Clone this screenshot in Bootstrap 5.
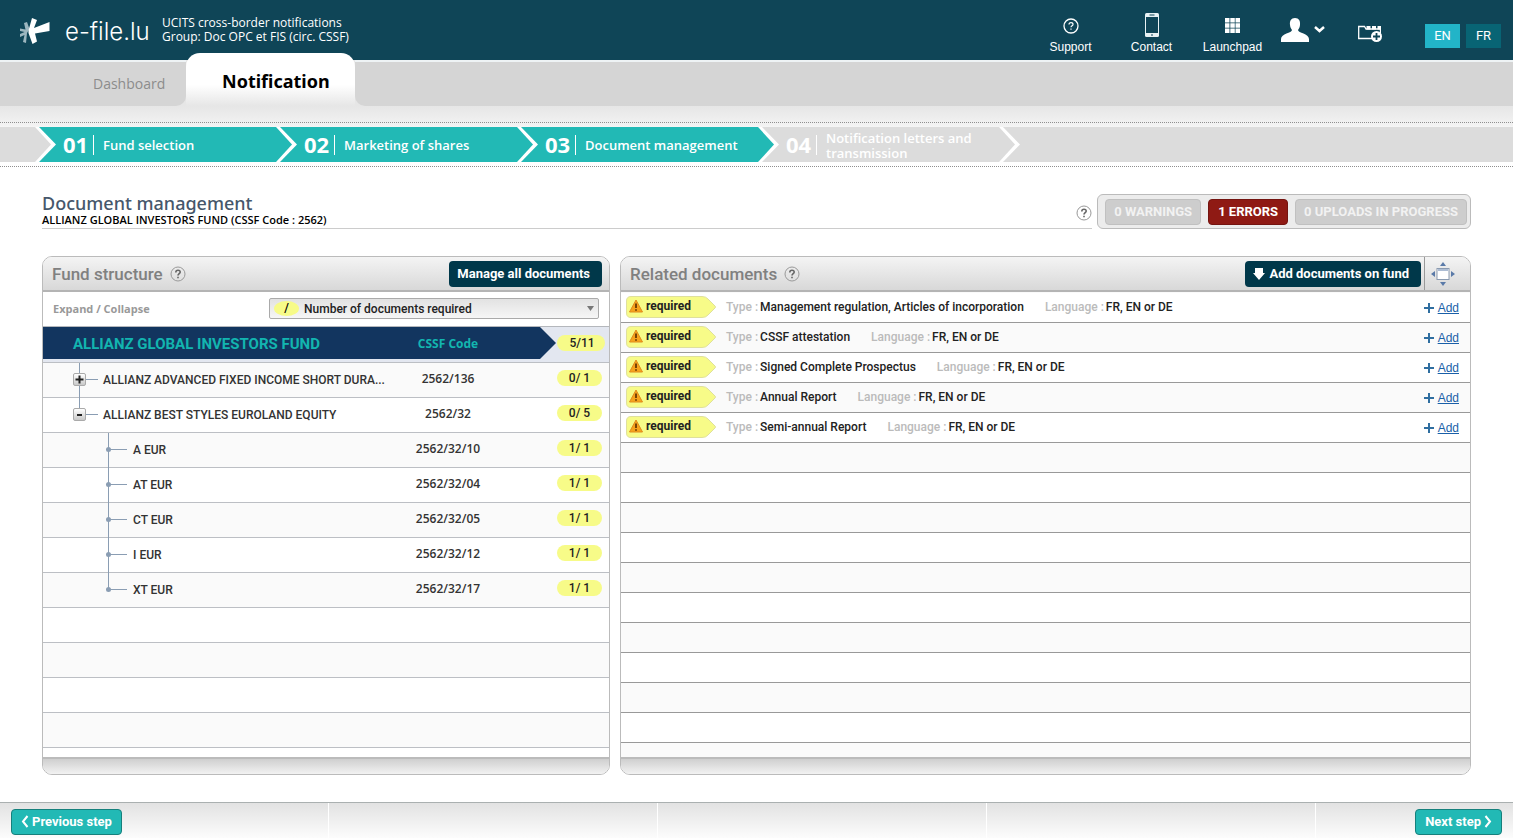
<!DOCTYPE html>
<html lang="en">
<head>
<meta charset="utf-8">
<meta name="viewport" content="width=device-width, initial-scale=1">
<title>e-file.lu - Document management</title>
<link rel="stylesheet" href="https://cdn.jsdelivr.net/npm/bootstrap@5.3.0/dist/css/bootstrap.min.css">
<style>
  :root { --navy:#0f4557; --teal:#22b9b5; --dark:#00384a; --yellow:#f7fb88; --tree:#8a9db3; }
  body { font-family:Roboto,sans-serif; font-size:12px; line-height:16px; color:#333; background:#fff; }
  .humanist { font-family:"Open Sans",sans-serif; }
  button, select { font-family:inherit; }

  /* top bar */
  .topbar { background:var(--navy); height:60px; color:#fff; padding-left:18px; padding-right:12px; }
  .brand-name { font-family:Inter,sans-serif; font-size:24px; line-height:32px; font-weight:300; color:#fff; width:97px; margin-left:14px; padding-top:4px; }
  .app-info { line-height:14px; }
  .tool { width:81px; height:60px; padding-bottom:6px; color:#fff; font-family:"Liberation Sans",sans-serif; line-height:14px; text-decoration:none; }
  .tool svg { margin-bottom:3px; }
  .folder { margin:8px 43px 0 33px; }
  .langs { gap:6px; margin-top:12px; }
  .lang { width:35px; height:24px; line-height:24px; font-size:13px; color:#fff; text-align:center; text-decoration:none; background:#086474; }
  .lang.current { background:#22b4c8; }

  /* tabs */
  .tabs { background:#e6e6e6; height:46px; }
  .tab-fill { background:#d5d5d5; border-top:2px solid #eef3f5; }
  .tab-fill.before { width:186px; border-bottom-right-radius:10px; padding-left:93px; }
  .tab-fill.after { border-bottom-left-radius:10px; }
  .tab-fill a { color:#8c8c8c; font-size:14px; text-decoration:none; }
  .tab-on { width:169px; height:53px; margin-top:-7px; border-radius:14px 14px 0 0; padding:3px 0 0 36px; color:#000; font-family:"Noto Sans",sans-serif; font-size:18px; font-weight:700; text-decoration:none;
    background:linear-gradient(#fff 60%,#e6e6e6); }

  /* wizard steps */
  .wizard { background:linear-gradient(#e6e6e6,#f3f3f3 20px,#fff 24px); padding-top:16px; }
  .dots { border-top:1px dotted #8f8f8f; border-bottom:1px dotted #8f8f8f; padding:4px 0; }
  .steps { background:#dcdcdc; height:35px; padding-left:34px; }
  .step { width:241px; color:#fff; font-weight:600; font-size:13px; line-height:15px; }
  .step.done { background:var(--teal); }
  .step svg { width:23px; height:35px; flex:none; }
  .step .num { font-size:22px; font-weight:700; width:30px; margin-left:6px; }
  .step .txt { border-left:1px solid #fff; padding:2px 0 0 9px; height:20px; width:168px; }

  /* page heading */
  .inner { padding:27px 42px 27px; }
  .heading { border-bottom:1px solid #ccc; }
  .heading h1 { font-family:"Noto Sans",sans-serif; font-size:18px; line-height:18px; font-weight:500; color:#46576b; margin:0; }
  .heading p { font-size:11px; line-height:16px; font-weight:600; color:#000; margin:0; }
  .statusbox { border:1px solid #bbb; border-radius:6px; background:#ececec; padding:3px 3px 3px 7px; margin-left:5px; gap:7px; height:35px; }
  .stat { border:1px solid #c0c0c0; background:#cdcdcd; color:#f2f2f2; border-radius:4px; font-size:13px; font-weight:700; line-height:24px; padding:0 8px; }
  .stat.err { background:#8f1a14; border-color:#741410; color:#fff; padding:0 9px; }

  /* panels */
  .panels { gap:10px; margin-top:27px; }
  .panel { border:1px solid #bbb; border-radius:10px; overflow:hidden; min-width:0; }
  .p-left { flex:2 1 0; } .p-right { flex:3 1 0; }
  .p-head { height:35px; background:linear-gradient(#f4f4f4,#d8d8d8); border-bottom:2px solid #b4b4b4; padding-left:9px; }
  .p-head h2 { font-size:17px; line-height:20px; font-weight:500; color:#808080; margin:0 7px 0 0; }
  .p-foot { height:17px; border-top:2px solid #bbb; background:linear-gradient(#cfcfcf,#f2f2f2); }
  .dark-btn { background:var(--dark); color:#fff; border:0; border-radius:4px; font-size:13px; font-weight:700; height:26px; line-height:26px; padding:0 12px 0 8px; gap:4px; margin-right:7px; }
  .dark-btn.add-docs { margin-right:3px; }
  .filter { height:34px; padding:0 10px 1px; }
  .filter label { color:#999; font-size:11px; font-weight:700; }
  .pick { position:relative; width:330px; }
  .pick select { display:block; appearance:none; width:100%; height:21px; border:1px solid #aaa; border-radius:2px; background:linear-gradient(#e2e2e2,#f6f6f6); color:#222; font-size:12px; font-weight:500; padding:0 20px 0 34px; }
  .pick .oval { position:absolute; left:5px; top:3px; width:25px; height:15px; line-height:15px; border-radius:50%; background:var(--yellow); text-align:center; color:#000; font-weight:500; pointer-events:none; }
  .pick svg { position:absolute; right:5px; top:8px; pointer-events:none; }

  .tree-bg { background:repeating-linear-gradient(#fafafa 0 34px,#bcbfc4 34px 35px,#fff 35px 69px,#bcbfc4 69px 70px) 0 37px; }
  .tree { width:100%; table-layout:fixed; border-collapse:separate; border-spacing:0; }
  .tree td, .tree th { padding:0; height:35px; border-bottom:1px solid #bcbfc4; vertical-align:middle; }
  .tree .c-code { width:160px; } .tree .c-count { width:53px; }
  .tree thead th { height:37px; background:#e3e7f0; border-top:1px solid #b4b7bc; vertical-align:top; }
  .ribbon { background:#12355f; height:32px; line-height:34px; color:#12b5b0; }
  .ribbon.first { padding-left:30px; font-size:15px; font-weight:700; }
  .ribbon.tip { clip-path:polygon(0 0,calc(100% - 16px) 0,100% 50%,calc(100% - 16px) 100%,0 100%); font-weight:700; }
  .code { text-align:center; padding-right:56px; }
  .tree tbody .code { padding-right:56px; padding-bottom:2px; font-weight:600; }
  .tree tbody tr:nth-child(odd) { background:#fafafa; } .tree tbody tr:nth-child(even) { background:#fff; }
  .count { display:block; width:45px; height:16px; line-height:16px; margin-left:1px; margin-bottom:4px; border-radius:8px; background:var(--yellow); color:#222; font-weight:500; text-align:center; }
  thead .count { width:48px; margin-top:8px; padding-left:2px; }
  .nm { height:34px; font-weight:500; white-space:nowrap; }
  .twig { position:relative; width:30px; height:34px; margin-left:30px; flex:none; }
  .twig::before { content:""; position:absolute; left:6px; top:0; height:35px; border-left:1px solid var(--tree); }
  .twig::after { content:""; position:absolute; left:6px; top:16px; width:19px; border-top:1px solid var(--tree); }
  .twig.end::before { height:16px; }
  .twig.leaf { margin-left:59px; width:31px; }
  .twig i { position:absolute; left:4px; top:14px; width:5px; height:5px; border-radius:50%; background:var(--tree); }
  .twig button { position:absolute; z-index:1; left:0; top:10px; width:13px; height:13px; padding:0; border:1px solid #aaa; border-radius:2px; background:linear-gradient(#fff,#c8c8c8); display:flex; }

  .docs-bg { background:repeating-linear-gradient(#fff 0 29px,#999 29px 30px,#fafafa 30px 59px,#999 59px 60px) 0 1px; }
  .docs { padding-top:1px; }
  .doc { height:30px; padding:0 11px 3px 5px; font-size:12px; font-weight:500; color:#222; }
  .tag { position:relative; width:90px; height:22px; line-height:21px; padding-left:20px; font-weight:700; color:#222; margin-right:10px; isolation:isolate; }
  .tag svg { position:absolute; left:0; top:0; z-index:-1; }
  .lbl { color:#bbb; margin-right:2px; }
  .val { margin-right:21px; }
  .add { font-family:"Liberation Sans",sans-serif; font-weight:400; color:#1a5fa8; padding-top:2px; }
  .expander { width:46px; background:none; border:solid #999; border-width:0 0 0 1px; padding:0 9px 0 0; }

  /* footer */
  .bottom { height:36px; border-top:1px solid #aab0b0; padding:2px 11px 0; background:repeating-linear-gradient(90deg,transparent 0 328px,#fff 328px 329px),linear-gradient(#e2e2e2,#fcfcfc); }
  .go { background:var(--teal); color:#fff; border:1px solid #16807c; border-radius:4px; height:26px; font-size:13px; font-weight:700; line-height:24px; padding:0 9px; gap:3px; }
</style>
</head>
<body class="d-flex flex-column min-vh-100">
<svg width="0" height="0" class="position-absolute" aria-hidden="true">
  <symbol id="help" viewBox="0 0 16 16"><circle cx="8" cy="8" r="7" fill="none" stroke="#999"/><path d="M5.800 6.400c0-3 4.400-2.800 4.400-.3C10.200 7.700 8 7.700 8 9.600M8 10.800v1.500" fill="none" stroke="#666" stroke-width="1.600"/></symbol>
  <symbol id="tag" viewBox="0 0 90 22"><path d="M5 .5H76Q80 .5 82 3L89 10Q90 11 89 12L82 19Q80 21.500 76 21.500H5Q.5 21.500 .5 17V5Q.5 .5 5 .5Z" fill="#f7fb88" stroke="#dfe09c"/><path d="M10 4 16.500 16H3.500Z" fill="#f6a31c" stroke="#e08a1c"/><path d="M10 7.500v4.500M10 13.200v1.600" stroke="#5a2a00" stroke-width="1.600"/></symbol>
  <symbol id="plus" viewBox="0 0 10 10"><path d="M5 0v10M0 5h10" stroke="#2f6ea0" stroke-width="2"/></symbol>
</svg>

<header class="topbar d-flex align-items-center">
  <svg width="33" height="32" viewBox="0 0 33 32" aria-hidden="true">
    <path d="M6 9 9 8 11.500 15 9 19 8 29 5 28 6.500 21 2 23V20L6.500 18 2 17V14.500L7.500 15.500Z" fill="#9db6bf"/>
    <path d="M14 4 19 6 16 14 31.500 8V17L17 19.500 19 27.500 14.500 30 10.500 19 10.500 16.500Z" fill="#fff"/>
  </svg>
  <a class="brand-name text-decoration-none text-nowrap" href="#">e-file.lu</a>
  <div class="app-info humanist text-nowrap">UCITS cross-border notifications<br>Group: Doc OPC et FIS (circ. CSSF)</div>
  <nav class="d-flex align-items-center ms-auto">
    <a class="tool d-flex flex-column align-items-center justify-content-end" href="#">
      <svg width="16" height="20" viewBox="0 0 16 20"><circle cx="8" cy="9" r="7" fill="none" stroke="#fff" stroke-width="1.300"/><path d="M6 7.600c0-2.600 4-2.400 4-.2C10 8.800 8 8.800 8 10.300M8 11.500v1.300" fill="none" stroke="#fff" stroke-width="1.200"/></svg>Support</a>
    <a class="tool d-flex flex-column align-items-center justify-content-end" href="#">
      <svg width="14" height="24" viewBox="0 0 14 24"><rect width="14" height="24" rx="1.500" fill="#e8f2f4"/><rect x="1" y="4" width="12" height="16" fill="#0f4557"/><path d="M4.500 2h5M6 22h2" stroke="#0f4557"/></svg>Contact</a>
    <a class="tool d-flex flex-column align-items-center justify-content-end" href="#">
      <svg width="15" height="20" viewBox="0 0 15 20"><path d="M0 1h4.500v4.500H0zM5.300 1h4.500v4.500H5.300zM10.500 1H15v4.500h-4.500zM0 6.300h4.500v4.500H0zM5.300 6.300h4.500v4.500H5.300zM10.500 6.300H15v4.500h-4.500zM0 11.500h4.500V16H0zM5.300 11.500h4.500V16H5.300zM10.500 11.500H15V16h-4.500z" fill="#fff"/></svg>Launchpad</a>
    <a class="ms-2" href="#" aria-label="Account"><svg class="d-block" width="44" height="26" viewBox="0 0 44 26"><path d="M14 1c4 0 5.500 3 5 7-.3 3-1.500 4-2 5 0 3 11 3.500 11 9v3H0v-3c0-5.500 11-6 11-9-.5-1-1.700-2-2-5-.5-4 1-7 5-7Z" fill="#fff"/><path d="m34 10 4.500 4L43 10" fill="none" stroke="#fff" stroke-width="2.500"/></svg></a>
    <a class="folder" href="#" aria-label="New folder"><svg class="d-block" width="24" height="18" viewBox="0 0 24 18"><path d="M14 13.500H.700V1.500H6.500L8 4h15" fill="none" stroke="#fff" stroke-width="1.300"/><path d="M8.500 1h4v3.500h-4zM14 1h4v3.500h-4zM19.500 1H23v7h-1.200V4.500h-2.300z" fill="#fff"/><circle cx="18.500" cy="11.500" r="5.500" fill="#fff"/><path d="M18.500 8v7M15 11.500h7" stroke="#0f4557" stroke-width="1.800"/></svg></a>
    <div class="langs d-flex"><a class="lang current" href="#">EN</a><a class="lang" href="#">FR</a></div>
  </nav>
</header>

<nav class="tabs humanist d-flex">
  <div class="tab-fill before d-flex align-items-center"><a href="#">Dashboard</a></div>
  <a class="tab-on d-flex align-items-center" href="#" aria-current="page">Notification</a>
  <div class="tab-fill after flex-grow-1"></div>
</nav>

<div class="wizard humanist">
  <div class="dots">
    <ol class="steps d-flex list-unstyled mb-0">
      <li class="step done d-flex align-items-center"><svg viewBox="0 0 23 35"><path d="M0 0H5L22 17.500 5 35H0Z" fill="#fff"/><path d="M0 0H1L17 17.500 1 35H0Z" fill="#dcdcdc"/></svg><span class="num">01</span><span class="txt d-flex align-items-center">Fund selection</span></li>
      <li class="step done d-flex align-items-center"><svg viewBox="0 0 23 35"><path d="M0 0H5L22 17.500 5 35H0Z" fill="#fff"/><path d="M0 0H1L17 17.500 1 35H0Z" fill="#22b9b5"/></svg><span class="num">02</span><span class="txt d-flex align-items-center">Marketing of shares</span></li>
      <li class="step done d-flex align-items-center"><svg viewBox="0 0 23 35"><path d="M0 0H5L22 17.500 5 35H0Z" fill="#fff"/><path d="M0 0H1L17 17.500 1 35H0Z" fill="#22b9b5"/></svg><span class="num">03</span><span class="txt d-flex align-items-center">Document management</span></li>
      <li class="step d-flex align-items-center"><svg viewBox="0 0 23 35"><path d="M0 0H5L22 17.500 5 35H0Z" fill="#fff"/><path d="M0 0H1L17 17.500 1 35H0Z" fill="#22b9b5"/></svg><span class="num">04</span><span class="txt d-flex align-items-center">Notification letters and transmission</span></li>
      <li class="step d-flex" aria-hidden="true"><svg viewBox="0 0 23 35"><path d="M0 0H5L22 17.500 5 35H0Z" fill="#fff"/><path d="M0 0H1L17 17.500 1 35H0Z" fill="#dcdcdc"/></svg></li>
    </ol>
  </div>
</div>

<main class="inner d-flex flex-column flex-grow-1">
  <div class="d-flex">
    <div class="heading humanist d-flex flex-grow-1 justify-content-between align-items-center">
      <div><h1>Document management</h1><p>ALLIANZ GLOBAL INVESTORS FUND (CSSF Code : 2562)</p></div>
      <svg width="16" height="20"><use href="#help" y="4" width="16" height="16"/></svg>
    </div>
    <div class="statusbox d-flex align-items-center">
      <button class="stat" type="button">0 WARNINGS</button>
      <button class="stat err" type="button">1 ERRORS</button>
      <button class="stat" type="button">0 UPLOADS IN PROGRESS</button>
    </div>
  </div>

  <div class="panels d-flex flex-grow-1">
    <section class="panel p-left d-flex flex-column">
      <div class="p-head d-flex align-items-center">
        <h2>Fund structure</h2><svg width="16" height="16"><use href="#help"/></svg>
        <button class="dark-btn ms-auto" type="button">Manage all documents</button>
      </div>
      <div class="filter d-flex align-items-center justify-content-between">
        <label class="humanist" for="show">Expand / Collapse</label>
        <div class="pick"><select id="show"><option>Number of documents required</option></select><span class="oval">/</span>
          <svg width="7" height="5" viewBox="0 0 7 5"><path d="M0 0h7L3.500 5Z" fill="#777"/></svg></div>
      </div>
      <div class="tree-bg flex-grow-1">
        <table class="tree">
          <colgroup><col><col class="c-code"><col class="c-count"></colgroup>
          <thead><tr><th><div class="ribbon first">ALLIANZ GLOBAL INVESTORS FUND</div></th><th><div class="ribbon tip code humanist">CSSF Code</div></th><th><span class="count">5/11</span></th></tr></thead>
          <tbody>
            <tr><td><div class="nm d-flex align-items-center"><span class="twig"><button type="button" aria-label="Expand"><svg width="11" height="11"><path d="M1.500 5.500h8M5.500 1.500v8" stroke="#222" stroke-width="2"/></svg></button></span>ALLIANZ ADVANCED FIXED INCOME SHORT DURA...</div></td><td class="code humanist">2562/136</td><td><span class="count">0/ 1</span></td></tr>
            <tr><td><div class="nm d-flex align-items-center"><span class="twig end"><button type="button" aria-label="Collapse"><svg width="11" height="11"><path d="M3 6h5" stroke="#222" stroke-width="2"/></svg></button></span>ALLIANZ BEST STYLES EUROLAND EQUITY</div></td><td class="code humanist">2562/32</td><td><span class="count">0/ 5</span></td></tr>
            <tr><td><div class="nm d-flex align-items-center"><span class="twig leaf"><i></i></span>A EUR</div></td><td class="code humanist">2562/32/10</td><td><span class="count">1/ 1</span></td></tr>
            <tr><td><div class="nm d-flex align-items-center"><span class="twig leaf"><i></i></span>AT EUR</div></td><td class="code humanist">2562/32/04</td><td><span class="count">1/ 1</span></td></tr>
            <tr><td><div class="nm d-flex align-items-center"><span class="twig leaf"><i></i></span>CT EUR</div></td><td class="code humanist">2562/32/05</td><td><span class="count">1/ 1</span></td></tr>
            <tr><td><div class="nm d-flex align-items-center"><span class="twig leaf"><i></i></span>I EUR</div></td><td class="code humanist">2562/32/12</td><td><span class="count">1/ 1</span></td></tr>
            <tr><td><div class="nm d-flex align-items-center"><span class="twig leaf end"><i></i></span>XT EUR</div></td><td class="code humanist">2562/32/17</td><td><span class="count">1/ 1</span></td></tr>
          </tbody>
        </table>
      </div>
      <div class="p-foot"></div>
    </section>

    <section class="panel p-right d-flex flex-column">
      <div class="p-head d-flex align-items-center">
        <h2>Related documents</h2><svg width="16" height="16"><use href="#help"/></svg>
        <button class="dark-btn add-docs ms-auto d-flex align-items-center" type="button"><svg width="12" height="12" viewBox="0 0 12 12"><path d="M2 0h8v5h2l-6 7L0 5h2Z" fill="#fff"/></svg>Add documents on fund</button>
        <button class="expander h-100" type="button" aria-label="Enlarge panel"><svg width="24" height="24" viewBox="0 0 24 24"><rect x="6" y="6.500" width="12" height="11" fill="#fff" stroke="#8a9ab0"/><path d="M7 8h10" stroke="#5a7aa8"/><path d="M12 0l3 4H9zM12 24l3-4H9zM0 12l4-3v6zM24 12l-4-3v6z" fill="#5a7aa8"/></svg></button>
      </div>
      <div class="docs-bg flex-grow-1">
        <ul class="docs list-unstyled mb-0">
          <li class="doc d-flex align-items-center"><span class="tag"><svg width="90" height="22"><use href="#tag"/></svg>required</span><span class="lbl">Type :</span><span class="val">Management regulation, Articles of incorporation</span><span class="lbl">Language :</span><span>FR, EN or DE</span><span class="add ms-auto"><svg width="10" height="10"><use href="#plus"/></svg>&nbsp;<a class="add" href="#">Add</a></span></li>
          <li class="doc d-flex align-items-center"><span class="tag"><svg width="90" height="22"><use href="#tag"/></svg>required</span><span class="lbl">Type :</span><span class="val">CSSF attestation</span><span class="lbl">Language :</span><span>FR, EN or DE</span><span class="add ms-auto"><svg width="10" height="10"><use href="#plus"/></svg>&nbsp;<a class="add" href="#">Add</a></span></li>
          <li class="doc d-flex align-items-center"><span class="tag"><svg width="90" height="22"><use href="#tag"/></svg>required</span><span class="lbl">Type :</span><span class="val">Signed Complete Prospectus</span><span class="lbl">Language :</span><span>FR, EN or DE</span><span class="add ms-auto"><svg width="10" height="10"><use href="#plus"/></svg>&nbsp;<a class="add" href="#">Add</a></span></li>
          <li class="doc d-flex align-items-center"><span class="tag"><svg width="90" height="22"><use href="#tag"/></svg>required</span><span class="lbl">Type :</span><span class="val">Annual Report</span><span class="lbl">Language :</span><span>FR, EN or DE</span><span class="add ms-auto"><svg width="10" height="10"><use href="#plus"/></svg>&nbsp;<a class="add" href="#">Add</a></span></li>
          <li class="doc d-flex align-items-center"><span class="tag"><svg width="90" height="22"><use href="#tag"/></svg>required</span><span class="lbl">Type :</span><span class="val">Semi-annual Report</span><span class="lbl">Language :</span><span>FR, EN or DE</span><span class="add ms-auto"><svg width="10" height="10"><use href="#plus"/></svg>&nbsp;<a class="add" href="#">Add</a></span></li>
        </ul>
      </div>
      <div class="p-foot"></div>
    </section>
  </div>
</main>

<footer class="bottom d-flex align-items-center justify-content-between">
  <button class="go d-flex align-items-center" type="button"><svg width="8" height="13" viewBox="0 0 8 13"><path d="M6.500 1 2 6.500 6.500 12" fill="none" stroke="#fff" stroke-width="2"/></svg>Previous step</button>
  <button class="go d-flex align-items-center" type="button">Next step<svg width="8" height="13" viewBox="0 0 8 13"><path d="M1.500 1 6 6.500 1.500 12" fill="none" stroke="#fff" stroke-width="2"/></svg></button>
</footer>
<script src="https://cdn.jsdelivr.net/npm/bootstrap@5.3.0/dist/js/bootstrap.bundle.min.js"></script>
</body>
</html>
